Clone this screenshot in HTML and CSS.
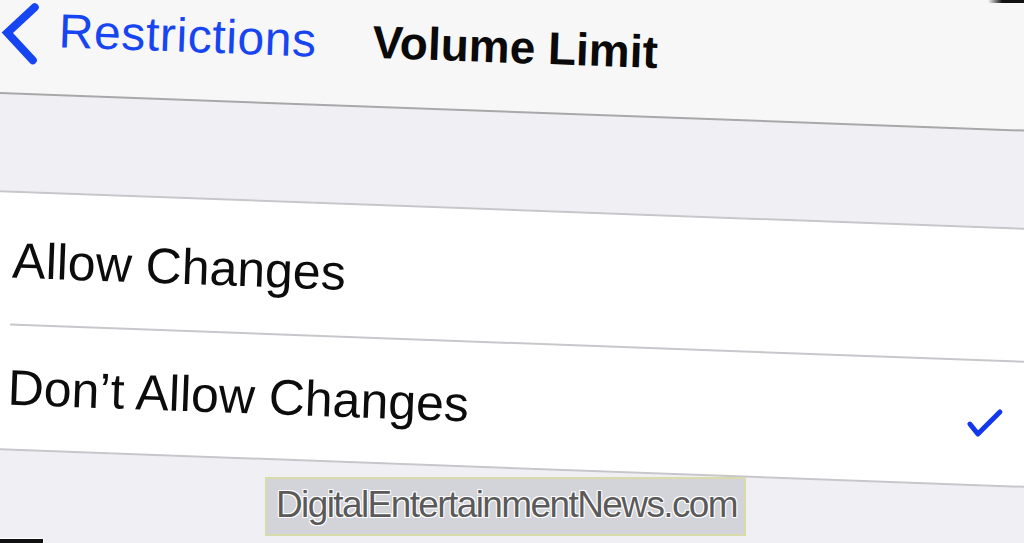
FILE: index.html
```html
<!DOCTYPE html>
<html lang="en">
<head>
  <meta charset="UTF-8">
  <title>Volume Limit</title>
  <link rel="stylesheet" href="styles.css">
</head>
<body>
  <div class="screen">
    <div class="navbar">
      <a class="back" href="#">
        <svg class="chevron" width="44" height="64" viewBox="0 0 44 64">
          <polyline points="35,6 8.5,32.5 35,59" fill="none" stroke="#1745f2" stroke-width="8" stroke-linecap="round" stroke-linejoin="miter"/>
        </svg>
        <span class="back-label">Restrictions</span>
      </a>
      <h1 class="title">Volume Limit</h1>
    </div>

    <div class="group">
      <div class="row">
        <div class="row-body">
          <span class="row-label">Allow Changes</span>
        </div>
      </div>
      <div class="row">
        <div class="row-body">
          <span class="row-label">Don’t Allow Changes</span>
          <svg class="check" width="37" height="29" viewBox="0 0 37 29">
            <polyline points="3.8,16.2 12.1,25.9 33.3,3.1" fill="none" stroke="#1237ee" stroke-width="5" stroke-linecap="round" stroke-linejoin="round"/>
          </svg>
        </div>
      </div>
    </div>
  </div>

  <div class="watermark">DigitalEntertainmentNews.com</div>
  <span class="edge edge-top"></span>
  <span class="edge edge-bottom"></span>
</body>
</html>
```

FILE: styles.css
```css
html,
body {
  margin: 0;
  height: 543px;
  overflow: hidden;
}
body {
  font-family: "Liberation Sans", Arial, sans-serif;
  background-color: #efeff4;
}

/* the photographed phone screen is a little tilted */
.screen {
  width: 1060px;
  height: 592px;
  margin-top: -50px;
  background-color: #efeff4;
  transform: rotate(2.1deg);
  transform-origin: 0 50px;
}

.navbar {
  display: flex;
  align-items: flex-start;
  box-sizing: border-box;
  height: 144px;
  padding-top: 50px;
  background-color: #f7f7f7;
  border-bottom: 2px solid #a8a8aa;
}
.back {
  display: flex;
  align-items: flex-start;
  color: #1745f2;
  text-decoration: none;
}
.chevron {
  display: block;
}
.back-label {
  margin: 5px 0 0 16px;
  font-size: 48px;
  line-height: 1;
  letter-spacing: 0.6px;
}
.title {
  margin: 5px 0 0 56px;
  font-size: 46px;
  line-height: 1;
  font-weight: bold;
  color: #0a0a0a;
}

.group {
  margin-top: 96px;
  background-color: #fff;
  border-top: 2px solid #c6c6cb;
  border-bottom: 2px solid #c6c6cb;
}
.row {
  padding-left: 22px;
}
.row-body {
  display: flex;
  align-items: center;
  justify-content: space-between;
  box-sizing: border-box;
  height: 125px;
  padding-right: 42px;
}
.row:first-child .row-body {
  height: 131px;
  padding-top: 4px;
}
.row + .row .row-body {
  border-top: 2px solid #c8c7cc;
}
.row-label {
  font-size: 50px;
  line-height: 1;
  color: #0c0c0c;
}
.check {
  display: block;
}

.watermark {
  position: absolute;
  left: 265px;
  top: 477px;
  box-sizing: border-box;
  width: 481px;
  height: 59px;
  padding: 7px 0 0 9px;
  background-color: #d3d3da;
  border: 2px solid #d9dcaa;
  font-size: 37px;
  line-height: 1;
  letter-spacing: -1.6px;
  color: #5a5a5a;
  text-shadow: 1px 1px 0 #fff, -1px -1px 0 #fff, 1px -1px 0 #fff, -1px 1px 0 #fff;
  white-space: nowrap;
}

.edge {
  position: absolute;
  background-color: #111;
}
.edge-top {
  right: 0;
  top: 0;
  width: 36px;
  height: 3px;
  background: linear-gradient(to right, rgba(17, 17, 17, 0), #111 40%);
}
.edge-bottom {
  left: 0;
  top: 538px;
  width: 43px;
  height: 5px;
  border-top: 1px solid #fff;
  border-right: 1px solid #fff;
}
```
